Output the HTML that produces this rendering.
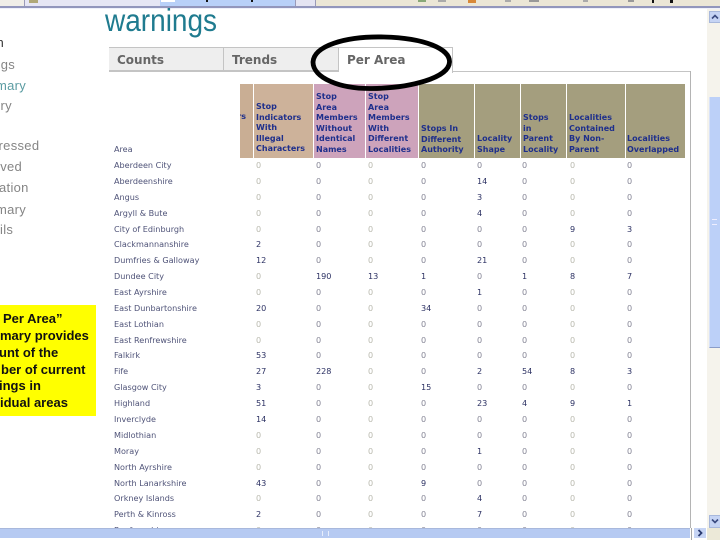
<!DOCTYPE html>
<html>
<head>
<meta charset="utf-8">
<style>
html,body{margin:0;padding:0;background:#fff}
#p{position:relative;width:720px;height:540px;overflow:hidden;background:#fff;font-family:"DejaVu Sans","Liberation Sans",sans-serif}
.a{position:absolute}
.side{position:absolute;left:0;font:13px/16px "Liberation Sans",sans-serif;letter-spacing:.3px;color:#858585;white-space:nowrap;filter:blur(.3px)}
.y{position:absolute;font:bold 13px/17px "Liberation Sans",sans-serif;color:#111;white-space:nowrap}
.tab{position:absolute;top:47px;height:24px;background:#eee;border:1px solid #c4c4c4;border-left:0;box-sizing:border-box;font:bold 12px/24px "DejaVu Sans",sans-serif;color:#666;padding-left:8px;filter:blur(.25px)}
.h{position:absolute;top:84px;height:74px}
.t{position:absolute;bottom:3px;font:bold 8px/10.5px "DejaVu Sans",sans-serif;color:#1e2f8c;white-space:nowrap}
#tb{position:absolute;left:0;top:0;width:720px;height:528px;overflow:hidden;filter:blur(.35px)}
.r{position:absolute;left:0;width:690px;height:14px;font:8.1px/14px "DejaVu Sans",sans-serif;color:#8a8a9a}
.r span{position:absolute;top:0;white-space:nowrap}
.r span:nth-child(1){left:114px;color:#4f5378}
.r span:nth-child(2){left:256px;color:#b9b9ae}
.r span:nth-child(3){left:316px;color:#858595}
.r span:nth-child(4){left:368px;color:#b9b9ae}
.r span:nth-child(5){left:421px;color:#858595}
.r span:nth-child(6){left:477px;color:#858595}
.r span:nth-child(7){left:522px;color:#858595}
.r span:nth-child(8){left:570px;color:#b9b9ae}
.r span:nth-child(9){left:627px;color:#858595}
.r span.n{color:#2c3163}
</style>
</head>
<body>
<div id="p">
<!-- top browser strip -->
<div class="a" style="left:0;top:0;width:720px;height:7px;background:#ebe6d6"></div>
<div class="a" style="left:0;top:0;width:24px;height:7px;background:#f0eee8"></div>
<div class="a" style="left:24px;top:0;width:135px;height:6px;background:#e6e6f4;border:1px solid #9a9ab8;border-top:0;box-sizing:content-box"></div>
<div class="a" style="left:160px;top:0;width:135px;height:7px;background:#b8d0f8"></div>
<div class="a" style="left:161px;top:0;width:14px;height:2px;background:#fff"></div>
<div class="a" style="left:295px;top:0;width:21px;height:7px;background:#e4e4f2;border-left:1px solid #9a9ab8;border-right:1px solid #9a9ab8;box-sizing:border-box"></div>
<div class="a" style="left:29px;top:0;width:9px;height:3px;background:#b0a878"></div>
<div class="a" style="left:206px;top:0;width:2px;height:2px;background:#111"></div>
<div class="a" style="left:251px;top:0;width:2px;height:2px;background:#111"></div>
<div class="a" style="left:418px;top:0;width:8px;height:2px;background:#88a878"></div>
<div class="a" style="left:438px;top:0;width:8px;height:2px;background:#aaa"></div>
<div class="a" style="left:468px;top:0;width:8px;height:3px;background:#d88838"></div>
<div class="a" style="left:505px;top:0;width:6px;height:2px;background:#aaa"></div>
<div class="a" style="left:529px;top:0;width:10px;height:2px;background:#999"></div>
<div class="a" style="left:583px;top:0;width:5px;height:2px;background:#aaa"></div>
<div class="a" style="left:628px;top:0;width:6px;height:2px;background:#999"></div>
<div class="a" style="left:652px;top:0;width:2px;height:3px;background:#111"></div>
<div class="a" style="left:670px;top:0;width:3px;height:3px;background:#111"></div>
<div class="a" style="left:0;top:6px;width:720px;height:2px;background:#9296bc"></div>
<div class="a" style="left:0;top:8px;width:720px;height:1px;background:#eef0fa"></div>

<!-- heading -->
<div class="a" style="left:105px;top:3px;font:28px/32px 'Liberation Sans',sans-serif;color:#1f7b8f;transform:scaleY(1.12);transform-origin:0 0;filter:blur(.3px)">warnings</div>

<!-- sidebar -->
<div class="side" style="top:35px;left:-11px;color:#333">on</div>
<div class="side" style="top:57px;left:-10px">ings</div>
<div class="side" style="top:78px;left:-4px;color:#5b9ca2">mary</div>
<div class="side" style="top:98px;left:-7px">ory</div>
<div class="side" style="top:138px;left:-9px">pressed</div>
<div class="side" style="top:159px;left:-3px">lved</div>
<div class="side" style="top:180px;left:-1px">ation</div>
<div class="side" style="top:202px;left:-4px">mary</div>
<div class="side" style="top:222px;left:0">ils</div>

<!-- yellow note -->
<div class="a" style="left:0;top:305px;width:96px;height:111px;background:#ffff00"></div>
<div class="y" style="left:3px;top:310px">Per Area”</div>
<div class="y" style="left:0;top:327px">mary provides</div>
<div class="y" style="left:-1px;top:344px">unt of the</div>
<div class="y" style="left:1px;top:361px">ber of current</div>
<div class="y" style="left:-1px;top:377px">ings in</div>
<div class="y" style="left:0;top:394px">idual areas</div>

<!-- tabs / panel -->
<div class="a" style="left:109px;top:71px;width:230px;height:1px;background:#c4c4c4"></div>
<div class="a" style="left:452px;top:71px;width:239px;height:1px;background:#c4c4c4"></div>
<div class="a" style="left:690px;top:71px;width:1px;height:457px;background:#b4b4b4"></div>
<div class="tab" style="left:109px;width:115px;">Counts</div>
<div class="tab" style="left:224px;width:115px;">Trends</div>
<div class="tab" style="left:339px;width:114px;height:26px;background:#fff;border-bottom:0">Per Area</div>

<!-- header blocks -->
<div class="h" style="left:240px;width:13px;background:#c9ae94"></div>
<div class="h" style="left:254px;width:59px;background:#cdb29a"></div>
<div class="h" style="left:314px;width:51px;background:#cda3bb"></div>
<div class="h" style="left:366px;width:52px;background:#cda3bb"></div>
<div class="h" style="left:419px;width:55px;background:#a49e7e"></div>
<div class="h" style="left:475px;width:45px;background:#a49e7e"></div>
<div class="h" style="left:521px;width:45px;background:#a49e7e"></div>
<div class="h" style="left:567px;width:58px;background:#a49e7e"></div>
<div class="h" style="left:626px;width:59px;background:#a49e7e"></div>

<div id="tb">
<div class="t" style="left:114px;top:144px;bottom:auto;color:#4f5378;font-weight:normal;font-size:8.1px">Area</div>
<div class="t" style="left:240px;top:112px;bottom:auto;color:#1e2f8c;width:6px;overflow:hidden;direction:rtl">rs</div>
<div class="t" style="left:256px;top:102px;bottom:auto">Stop<br>Indicators<br>With<br>Illegal<br>Characters</div>
<div class="t" style="left:316px;top:92px;bottom:auto">Stop<br>Area<br>Members<br>Without<br>Identical<br>Names</div>
<div class="t" style="left:368px;top:92px;bottom:auto">Stop<br>Area<br>Members<br>With<br>Different<br>Localities</div>
<div class="t" style="left:421px;top:124px;bottom:auto">Stops In<br>Different<br>Authority</div>
<div class="t" style="left:477px;top:134px;bottom:auto">Locality<br>Shape</div>
<div class="t" style="left:523px;top:113px;bottom:auto">Stops<br>in<br>Parent<br>Locality</div>
<div class="t" style="left:569px;top:113px;bottom:auto">Localities<br>Contained<br>By Non-<br>Parent</div>
<div class="t" style="left:627px;top:134px;bottom:auto">Localities<br>Overlapped</div>

<div class="r" style="top:158px"><span>Aberdeen City</span><span>0</span><span>0</span><span>0</span><span>0</span><span>0</span><span>0</span><span>0</span><span>0</span></div>
<div class="r" style="top:174px"><span>Aberdeenshire</span><span>0</span><span>0</span><span>0</span><span>0</span><span class="n">14</span><span>0</span><span>0</span><span>0</span></div>
<div class="r" style="top:190px"><span>Angus</span><span>0</span><span>0</span><span>0</span><span>0</span><span class="n">3</span><span>0</span><span>0</span><span>0</span></div>
<div class="r" style="top:206px"><span>Argyll &amp; Bute</span><span>0</span><span>0</span><span>0</span><span>0</span><span class="n">4</span><span>0</span><span>0</span><span>0</span></div>
<div class="r" style="top:222px"><span>City of Edinburgh</span><span>0</span><span>0</span><span>0</span><span>0</span><span>0</span><span>0</span><span class="n">9</span><span class="n">3</span></div>
<div class="r" style="top:237px"><span>Clackmannanshire</span><span class="n">2</span><span>0</span><span>0</span><span>0</span><span>0</span><span>0</span><span>0</span><span>0</span></div>
<div class="r" style="top:253px"><span>Dumfries &amp; Galloway</span><span class="n">12</span><span>0</span><span>0</span><span>0</span><span class="n">21</span><span>0</span><span>0</span><span>0</span></div>
<div class="r" style="top:269px"><span>Dundee City</span><span>0</span><span class="n">190</span><span class="n">13</span><span class="n">1</span><span>0</span><span class="n">1</span><span class="n">8</span><span class="n">7</span></div>
<div class="r" style="top:285px"><span>East Ayrshire</span><span>0</span><span>0</span><span>0</span><span>0</span><span class="n">1</span><span>0</span><span>0</span><span>0</span></div>
<div class="r" style="top:301px"><span>East Dunbartonshire</span><span class="n">20</span><span>0</span><span>0</span><span class="n">34</span><span>0</span><span>0</span><span>0</span><span>0</span></div>
<div class="r" style="top:317px"><span>East Lothian</span><span>0</span><span>0</span><span>0</span><span>0</span><span>0</span><span>0</span><span>0</span><span>0</span></div>
<div class="r" style="top:333px"><span>East Renfrewshire</span><span>0</span><span>0</span><span>0</span><span>0</span><span>0</span><span>0</span><span>0</span><span>0</span></div>
<div class="r" style="top:348px"><span>Falkirk</span><span class="n">53</span><span>0</span><span>0</span><span>0</span><span>0</span><span>0</span><span>0</span><span>0</span></div>
<div class="r" style="top:364px"><span>Fife</span><span class="n">27</span><span class="n">228</span><span>0</span><span>0</span><span class="n">2</span><span class="n">54</span><span class="n">8</span><span class="n">3</span></div>
<div class="r" style="top:380px"><span>Glasgow City</span><span class="n">3</span><span>0</span><span>0</span><span class="n">15</span><span>0</span><span>0</span><span>0</span><span>0</span></div>
<div class="r" style="top:396px"><span>Highland</span><span class="n">51</span><span>0</span><span>0</span><span>0</span><span class="n">23</span><span class="n">4</span><span class="n">9</span><span class="n">1</span></div>
<div class="r" style="top:412px"><span>Inverclyde</span><span class="n">14</span><span>0</span><span>0</span><span>0</span><span>0</span><span>0</span><span>0</span><span>0</span></div>
<div class="r" style="top:428px"><span>Midlothian</span><span>0</span><span>0</span><span>0</span><span>0</span><span>0</span><span>0</span><span>0</span><span>0</span></div>
<div class="r" style="top:444px"><span>Moray</span><span>0</span><span>0</span><span>0</span><span>0</span><span class="n">1</span><span>0</span><span>0</span><span>0</span></div>
<div class="r" style="top:460px"><span>North Ayrshire</span><span>0</span><span>0</span><span>0</span><span>0</span><span>0</span><span>0</span><span>0</span><span>0</span></div>
<div class="r" style="top:476px"><span>North Lanarkshire</span><span class="n">43</span><span>0</span><span>0</span><span class="n">9</span><span>0</span><span>0</span><span>0</span><span>0</span></div>
<div class="r" style="top:491px"><span>Orkney Islands</span><span>0</span><span>0</span><span>0</span><span>0</span><span class="n">4</span><span>0</span><span>0</span><span>0</span></div>
<div class="r" style="top:507px"><span>Perth &amp; Kinross</span><span class="n">2</span><span>0</span><span>0</span><span>0</span><span class="n">7</span><span>0</span><span>0</span><span>0</span></div>
<div class="r" style="top:523px"><span>Renfrewshire</span><span>0</span><span>0</span><span>0</span><span>0</span><span>0</span><span>0</span><span>0</span><span>0</span></div>
</div>

<!-- hand-drawn ellipse -->
<svg class="a" style="left:300px;top:25px" width="165" height="75" viewBox="300 25 165 75">
<path d="M 384 37 C 345 36 314 46 313 62 C 313 78 340 89 372 88.5 C 410 88 449 78 449.5 62 C 450 49 425 38 384 37 Z" fill="none" stroke="#000" stroke-width="4.8"/>
</svg>

<!-- vertical scrollbar -->
<div class="a" style="left:707px;top:9px;width:13px;height:531px;background:#f5f3ec"></div>
<div class="a" style="left:709px;top:11px;width:10px;height:10px;background:#c6d4f4;border:1px solid #a8b8dc;box-sizing:content-box"></div>
<svg class="a" style="left:709px;top:11px" width="12" height="12"><path d="M3 7.5 L6 4.5 L9 7.5" fill="none" stroke="#3a4a80" stroke-width="1.6"/></svg>
<div class="a" style="left:709px;top:97px;width:10px;height:250px;background:#bcd0f8;border-bottom:1px solid #8a9cc8;border-left:1px solid #d8e2f8"></div>
<div class="a" style="left:712px;top:219px;width:5px;height:4px;border-top:1px solid #eef;border-bottom:1px solid #eef"></div>
<div class="a" style="left:709px;top:515px;width:10px;height:11px;background:#c6d4f4;border:1px solid #a8b8dc"></div>
<svg class="a" style="left:709px;top:515px" width="12" height="12"><path d="M3 4.5 L6 7.5 L9 4.5" fill="none" stroke="#3a4a80" stroke-width="1.6"/></svg>

<!-- horizontal scrollbar -->
<div class="a" style="left:0;top:528px;width:690px;height:10px;background:#b6caf2;border-top:1px solid #a8b8dc;box-sizing:border-box"></div>
<div class="a" style="left:322px;top:531px;width:5px;height:5px;border-left:1px solid #e8eefc;border-right:1px solid #e8eefc"></div>
<div class="a" style="left:691px;top:528px;width:1px;height:12px;background:#a8a8a8"></div>
<div class="a" style="left:694px;top:528px;width:12px;height:10px;background:#c6d4f4"></div>
<svg class="a" style="left:694px;top:527px" width="12" height="12"><path d="M4.5 3 L7.5 6 L4.5 9" fill="none" stroke="#2a3a70" stroke-width="1.8"/></svg>
<div class="a" style="left:707px;top:528px;width:13px;height:12px;background:#ece9d8"></div>
</div>
</body>
</html>
